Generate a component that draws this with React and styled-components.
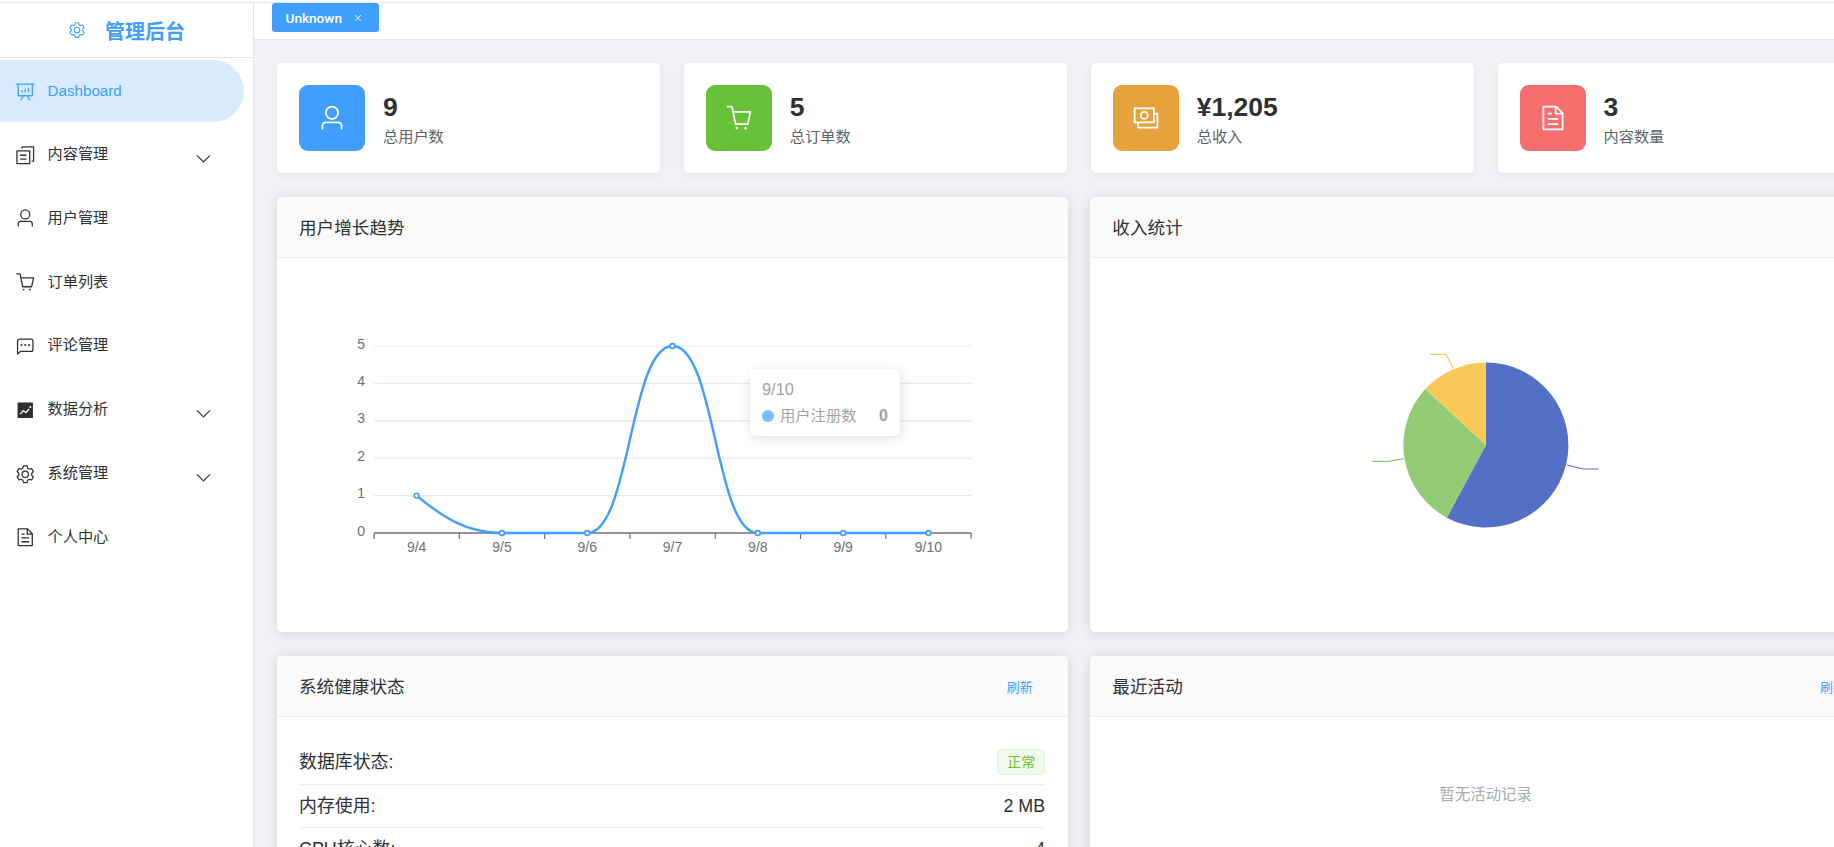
import React from "react";
import styled, { createGlobalStyle } from "styled-components";

const ICONS = {
    setting: "M600.704 64a32 32 0 0 1 30.464 22.208l35.2 109.376c14.784 7.232 28.928 15.36 42.432 24.512l112.384-24.192a32 32 0 0 1 34.432 15.36L944.32 364.8a32 32 0 0 1-4.032 37.504l-77.12 85.12a357.12 357.12 0 0 1 0 49.024l77.12 85.248a32 32 0 0 1 4.032 37.504l-88.704 153.6a32 32 0 0 1-34.432 15.296L708.8 803.904c-13.44 9.088-27.648 17.28-42.368 24.512l-35.264 109.376A32 32 0 0 1 600.704 960H423.296a32 32 0 0 1-30.464-22.208L357.696 828.48a351.616 351.616 0 0 1-42.56-24.64l-112.32 24.256a32 32 0 0 1-34.432-15.36L79.68 659.2a32 32 0 0 1 4.032-37.504l77.12-85.248a357.12 357.12 0 0 1 0-48.896l-77.12-85.248A32 32 0 0 1 79.68 364.8l88.704-153.6a32 32 0 0 1 34.432-15.296l112.32 24.256c13.568-9.152 27.776-17.408 42.56-24.64l35.2-109.312A32 32 0 0 1 423.232 64H600.64zm-23.424 64H446.72l-36.352 113.088-24.512 11.968a294.113 294.113 0 0 0-34.816 20.096l-22.656 15.36-116.224-25.088-65.28 113.152 79.68 88.192-1.92 27.136a293.12 293.12 0 0 0 0 40.192l1.92 27.136-79.808 88.192 65.344 113.152 116.224-25.024 22.656 15.296a294.113 294.113 0 0 0 34.816 20.096l24.512 11.968L446.72 896h130.688l36.48-113.152 24.448-11.904a288.282 288.282 0 0 0 34.752-20.096l22.592-15.296 116.288 25.024 65.28-113.152-79.744-88.192 1.92-27.136a293.12 293.12 0 0 0 0-40.256l-1.92-27.136 79.808-88.128-65.344-113.152-116.288 24.96-22.592-15.232a287.616 287.616 0 0 0-34.752-20.096l-24.448-11.904L577.344 128zM512 320a192 192 0 1 1 0 384 192 192 0 0 1 0-384zm0 64a128 128 0 1 0 0 256 128 128 0 0 0 0-256z",
    board: "m665.216 768 110.848 192h-73.856L591.36 768H433.664L322.56 960H248.32l110.848-192H160a32 32 0 0 1-32-32V192H64a32 32 0 0 1 0-64h896a32 32 0 1 1 0 64h-64v544a32 32 0 0 1-32 32H665.216zM832 192H192v512h640V192zM352 448a32 32 0 0 1 32 32v64a32 32 0 0 1-64 0v-64a32 32 0 0 1 32-32zm160-64a32 32 0 0 1 32 32v128a32 32 0 0 1-64 0V416a32 32 0 0 1 32-32zm160-64a32 32 0 0 1 32 32v192a32 32 0 1 1-64 0V352a32 32 0 0 1 32-32z",
    copy: "M128 320v576h576V320H128zm-32-64h640a32 32 0 0 1 32 32v640a32 32 0 0 1-32 32H96a32 32 0 0 1-32-32V288a32 32 0 0 1 32-32zM960 96v704a32 32 0 0 1-32 32h-96v-64h64V128H384v64h-64V96a32 32 0 0 1 32-32h576a32 32 0 0 1 32 32zM256 672h320v64H256v-64zm0-192h320v64H256v-64z",
    user: "M512 512a192 192 0 1 0 0-384 192 192 0 0 0 0 384zm0 64a256 256 0 1 1 0-512 256 256 0 0 1 0 512zm320 320v-96a96 96 0 0 0-96-96H288a96 96 0 0 0-96 96v96a32 32 0 1 1-64 0v-96a160 160 0 0 1 160-160h448a160 160 0 0 1 160 160v96a32 32 0 1 1-64 0z",
    cart: "M432 928a48 48 0 1 1 0-96 48 48 0 0 1 0 96zm320 0a48 48 0 1 1 0-96 48 48 0 0 1 0 96zM96 128a32 32 0 0 1 0-64h160a32 32 0 0 1 31.36 25.728L320.64 256H928a32 32 0 0 1 31.296 38.72l-96 448A32 32 0 0 1 832 768H384a32 32 0 0 1-31.36-25.728L229.76 128H96zm314.24 576h395.904l82.304-384H333.44l76.8 384z",
    chat: "M273.536 736H800a64 64 0 0 0 64-64V256a64 64 0 0 0-64-64H224a64 64 0 0 0-64 64v570.88L273.536 736zM296 800 147.968 918.4A32 32 0 0 1 96 893.44V256a128 128 0 0 1 128-128h576a128 128 0 0 1 128 128v416a128 128 0 0 1-128 128H296zM512 499.2a51.2 51.2 0 1 1 0-102.4 51.2 51.2 0 0 1 0 102.4zm192 0a51.2 51.2 0 1 1 0-102.4 51.2 51.2 0 0 1 0 102.4zm-384 0a51.2 51.2 0 1 1 0-102.4 51.2 51.2 0 0 1 0 102.4z",
    trend: "M128 896V128h768v768H128zm291.712-327.296 128 102.4 180.16-201.792-47.744-42.624-139.84 156.608-128-102.4-180.16 201.792 47.744 42.624 139.84-156.608zM816 352a48 48 0 1 0-96 0 48 48 0 0 0 96 0z",
    doc: "M832 384H576V128H192v768h640V384zm-26.496-64L640 154.496V320h165.504zM160 64h480l256 256v608a32 32 0 0 1-32 32H160a32 32 0 0 1-32-32V96a32 32 0 0 1 32-32zm160 448h384v64H320v-64zm0-192h160v64H320v-64zm0 384h384v64H320v-64z",
    money: "M256 640v192h640V384H768v-64h150.976c14.272 0 19.456 1.472 24.64 4.288a29.056 29.056 0 0 1 12.16 12.096c2.752 5.184 4.224 10.368 4.224 24.64v493.952c0 14.272-1.472 19.456-4.288 24.64a29.056 29.056 0 0 1-12.096 12.16c-5.184 2.752-10.368 4.224-24.64 4.224H233.024c-14.272 0-19.456-1.472-24.64-4.288a29.056 29.056 0 0 1-12.16-12.096c-2.688-5.184-4.224-10.368-4.224-24.576V640h64zM768 192H128v448h640V192zm64-22.976v493.952c0 14.272-1.472 19.456-4.288 24.64a29.056 29.056 0 0 1-12.096 12.16c-5.184 2.752-10.368 4.224-24.64 4.224H105.024c-14.272 0-19.456-1.472-24.64-4.288a29.056 29.056 0 0 1-12.16-12.096C65.536 682.432 64 677.248 64 663.04V169.024c0-14.272 1.472-19.456 4.288-24.64a29.056 29.056 0 0 1 12.096-12.16C85.568 129.536 90.752 128 104.96 128h685.952c14.272 0 19.456 1.472 24.64 4.288a29.056 29.056 0 0 1 12.16 12.096c2.752 5.184 4.224 10.368 4.224 24.64zM448 576a160 160 0 1 1 0-320 160 160 0 0 1 0 320zm0-64a96 96 0 1 0 0-192 96 96 0 0 0 0 192z",
    arrow: "M831.872 340.864 512 652.672 192.128 340.864a30.592 30.592 0 0 0-42.752 0 29.12 29.12 0 0 0 0 41.6L489.664 714.24a32 32 0 0 0 44.672 0l340.288-331.712a29.12 29.12 0 0 0 0-41.728 30.592 30.592 0 0 0-42.752 0z",
    close: "M764.288 214.592 512 466.88 259.712 214.592a31.936 31.936 0 0 0-45.12 45.12L466.752 512 214.528 764.224a31.936 31.936 0 1 0 45.12 45.184L512 557.184l252.288 252.288a31.936 31.936 0 0 0 45.12-45.12L557.12 512.064l252.288-252.352a31.936 31.936 0 1 0-45.12-45.184z",
};

const MENU = [
    { icon: "board", label: "Dashboard", active: true },
    { icon: "copy", label: "内容管理", sub: true },
    { icon: "user", label: "用户管理" },
    { icon: "cart", label: "订单列表" },
    { icon: "chat", label: "评论管理" },
    { icon: "trend", label: "数据分析", sub: true },
    { icon: "setting", label: "系统管理", sub: true },
    { icon: "doc", label: "个人中心" },
];

const STATS = [
    { icon: "user", color: "#409eff", value: "9", label: "总用户数" },
    { icon: "cart", color: "#67c23a", value: "5", label: "总订单数" },
    { icon: "money", color: "#e6a23c", value: "¥1,205", label: "总收入" },
    { icon: "doc", color: "#f76e6f", value: "3", label: "内容数量" },
];

// chart coordinates are taken straight from the page, the svg viewBox offsets them
const BAND = 85.3;
const AXIS_LEFT = 374;
const AXIS_RIGHT = 971;
const AXIS_Y = 533;
const ROW_H = 37.4;
const DAYS = ["9/4", "9/5", "9/6", "9/7", "9/8", "9/9", "9/10"];
const COUNTS = [1, 0, 0, 5, 0, 0, 0];
const pointX = (i) => AXIS_LEFT + BAND * (i + 0.5);
const pointY = (v) => AXIS_Y - v * ROW_H;

const LINE_PATH = `M${pointX(0)} ${pointY(1)} C${pointX(0) + 24} ${pointY(1) + 20} ${pointX(1) - 36} ${AXIS_Y} ${pointX(1)} ${AXIS_Y}
    L${pointX(2)} ${AXIS_Y}
    C${pointX(2) + 43} ${AXIS_Y} ${pointX(3) - 43} ${pointY(5)} ${pointX(3)} ${pointY(5)}
    C${pointX(3) + 43} ${pointY(5)} ${pointX(4) - 43} ${AXIS_Y} ${pointX(4)} ${AXIS_Y}
    L${pointX(6)} ${AXIS_Y}`;

const PIE = { cx: 1486.3, cy: 445, r: 82.5 };
const SLICES = [
    { color: "#5470c6", from: 0, to: 208.3, line: "1567.3,465 1583.3,469 1599,469" },
    { color: "#91cc75", from: 208.3, to: 312.7, line: "1404,458.7 1390,461.3 1372,461.3" },
    { color: "#fac858", from: 312.7, to: 360, line: "1453.3,368.3 1446.7,354.3 1430,354.3" },
];

const slicePath = ({ from, to }) => {
    const at = (deg) => {
        const a = (deg * Math.PI) / 180;
        return `${PIE.cx + PIE.r * Math.sin(a)} ${PIE.cy - PIE.r * Math.cos(a)}`;
    };
    return `M${PIE.cx} ${PIE.cy} L${at(from)} A${PIE.r} ${PIE.r} 0 ${to - from > 180 ? 1 : 0} 1 ${at(to)} Z`;
};

const Icon = ({ name, size, color, className }) => (
    <IconSvg viewBox="0 0 1024 1024" $size={size} $color={color} className={className}>
        <path fill="currentColor" d={ICONS[name]} />
    </IconSvg>
);

function LineChart() {
    return (
        <ChartSvg viewBox="277 258 791 374" width="791" height="374">
            {[1, 2, 3, 4, 5].map((v) => (
                <line key={v} x1={AXIS_LEFT} x2={AXIS_RIGHT} y1={pointY(v)} y2={pointY(v)} stroke="#e4e9f5" strokeWidth="1.2" />
            ))}
            <line x1={AXIS_LEFT} x2={AXIS_RIGHT} y1={AXIS_Y} y2={AXIS_Y} stroke="#6e7079" strokeWidth="1.4" />
            {Array.from({ length: 8 }, (_, i) => (
                <line key={i} x1={AXIS_LEFT + BAND * i} x2={AXIS_LEFT + BAND * i} y1={AXIS_Y} y2={AXIS_Y + 6} stroke="#6e7079" strokeWidth="1.2" />
            ))}
            {[0, 1, 2, 3, 4, 5].map((v) => (
                <AxisText key={v} x="365" y={pointY(v) + 2.5} textAnchor="end">{v}</AxisText>
            ))}
            {DAYS.map((d, i) => (
                <AxisText key={d} x={pointX(i)} y="551.5" textAnchor="middle">{d}</AxisText>
            ))}
            <path d={LINE_PATH} fill="none" stroke="#409eff" strokeWidth="2.4" />
            {COUNTS.map((v, i) => (
                <circle key={i} cx={pointX(i)} cy={pointY(v)} r="2.4" fill="#fff" stroke="#409eff" strokeWidth="1.6" />
            ))}
        </ChartSvg>
    );
}

function PieChart() {
    return (
        <ChartSvg viewBox="1090.4 258 791 374" width="791" height="374">
            {SLICES.map((s) => (
                <g key={s.color}>
                    <polyline points={s.line} fill="none" stroke={s.color} strokeWidth="1.2" />
                    <path d={slicePath(s)} fill={s.color} />
                </g>
            ))}
        </ChartSvg>
    );
}

export default function App() {
    return (
        <Page>
            <GlobalStyle />
            <TopRule />
            <Layout>
                <Sidebar>
                    <Logo>
                        <Icon name="setting" size={18} color="#409eff" />
                        <LogoText>管理后台</LogoText>
                    </Logo>
                    <Menu>
                        {MENU.map((item) => (
                            <MenuItem key={item.label} $active={item.active}>
                                <Icon name={item.icon} size={20.5} />
                                <MenuLabel $active={item.active}>{item.label}</MenuLabel>
                                {item.sub && <MenuArrow name="arrow" size={19} color="#303133" />}
                            </MenuItem>
                        ))}
                    </Menu>
                </Sidebar>
                <Main>
                    <TabBar>
                        <Tab>
                            Unknown
                            <Icon name="close" size={10} />
                        </Tab>
                    </TabBar>
                    <Content>
                        <StatRow>
                            {STATS.map((s) => (
                                <StatCard key={s.label}>
                                    <StatIcon $color={s.color}>
                                        <Icon name={s.icon} size={28} />
                                    </StatIcon>
                                    <div>
                                        <StatValue>{s.value}</StatValue>
                                        <StatLabel>{s.label}</StatLabel>
                                    </div>
                                </StatCard>
                            ))}
                        </StatRow>
                        <CardRow>
                            <Card>
                                <CardHeader>
                                    <CardTitle>用户增长趋势</CardTitle>
                                </CardHeader>
                                <ChartArea>
                                    <LineChart />
                                    <Tooltip>
                                        <TooltipTitle>9/10</TooltipTitle>
                                        <TooltipRow>
                                            <TooltipDot />
                                            用户注册数
                                            <TooltipValue>0</TooltipValue>
                                        </TooltipRow>
                                    </Tooltip>
                                </ChartArea>
                            </Card>
                            <Card>
                                <CardHeader>
                                    <CardTitle>收入统计</CardTitle>
                                </CardHeader>
                                <ChartArea>
                                    <PieChart />
                                </ChartArea>
                            </Card>
                        </CardRow>
                        <CardRow>
                            <Card>
                                <CardHeader>
                                    <CardTitle>系统健康状态</CardTitle>
                                    <RefreshLink>刷新</RefreshLink>
                                </CardHeader>
                                <HealthBody>
                                    <HealthRow>
                                        <span>数据库状态:</span>
                                        <StatusTag>正常</StatusTag>
                                    </HealthRow>
                                    <HealthRow>
                                        <span>内存使用:</span>
                                        <span>2 MB</span>
                                    </HealthRow>
                                    <HealthRow>
                                        <span>CPU核心数:</span>
                                        <span>4</span>
                                    </HealthRow>
                                </HealthBody>
                            </Card>
                            <Card>
                                <CardHeader>
                                    <CardTitle>最近活动</CardTitle>
                                    <RefreshLink>刷新</RefreshLink>
                                </CardHeader>
                                <EmptyNote>暂无活动记录</EmptyNote>
                            </Card>
                        </CardRow>
                    </Content>
                </Main>
            </Layout>
        </Page>
    );
}

const GlobalStyle = createGlobalStyle`
    html, body {
        margin: 0;
        height: 100%;
        overflow: hidden;
        background: #fff;
    }
    * {
        box-sizing: border-box;
    }
`;

const Page = styled.div`
    width: 1834px;
    height: 847px;
    overflow: hidden;
    display: flex;
    flex-direction: column;
    font-family: "Liberation Sans", "Noto Sans CJK SC", sans-serif;
    color: #303133;
`;

const TopRule = styled.div`
    flex: none;
    height: 3px;
    border-bottom: 1px solid #e6e8f0;
`;

const Layout = styled.div`
    flex: 1;
    display: flex;
    min-height: 0;
`;

const IconSvg = styled.svg`
    flex: none;
    display: block;
    width: ${(p) => p.$size}px;
    height: ${(p) => p.$size}px;
    color: ${(p) => p.$color || "currentColor"};
`;

const Sidebar = styled.aside`
    flex: none;
    width: 254px;
    background: #fff;
    border-right: 1px solid #e6e6e6;
`;

const Logo = styled.div`
    height: 55px;
    display: flex;
    align-items: center;
    padding-left: 68px;
    gap: 19px;
    border-bottom: 1px solid #e6e6e6;
`;

const LogoText = styled.span`
    font-size: 20px;
    font-weight: 700;
    color: #409eff;
`;

const Menu = styled.nav`
    display: flex;
    flex-direction: column;
    gap: 1.8px;
    padding-top: 2px;
`;

const MenuItem = styled.div`
    width: 244px;
    height: 62px;
    display: flex;
    align-items: center;
    padding: 0 31px 0 15px;
    gap: 12px;
    font-size: 15.2px;
    color: ${(p) => (p.$active ? "#409eff" : "#303133")};
    background: ${(p) => (p.$active ? "#d9ecff" : "transparent")};
    border-radius: ${(p) => (p.$active ? "0 31px 31px 0" : "0")};
`;

const MenuLabel = styled.span`
    flex: 1;
    padding-bottom: ${(p) => (p.$active ? "2px" : "5.5px")};
`;

const MenuArrow = styled(Icon)`
    margin-top: 7px;
`;

const Main = styled.main`
    flex: 1;
    min-width: 0;
    display: flex;
    flex-direction: column;
    background: #f0f2f5;
`;

const TabBar = styled.div`
    flex: none;
    height: 37px;
    padding-left: 18px;
    background: #fff;
    border-bottom: 1px solid #e4e7ed;
`;

const Tab = styled.div`
    width: 107px;
    height: 29px;
    display: flex;
    align-items: center;
    gap: 11px;
    padding-left: 13.5px;
    border-radius: 3px;
    background: #409eff;
    color: #fff;
    font-family: Roboto, "Liberation Sans", sans-serif;
    font-size: 13.6px;
    font-weight: 500;
`;

const Content = styled.div`
    width: 1650px;
    padding: 23px 23px 0;
    display: flex;
    flex-direction: column;
    gap: 24px;
`;

const StatRow = styled.div`
    display: grid;
    grid-template-columns: repeat(4, 1fr);
    gap: 23.4px;
`;

const StatCard = styled.div`
    height: 110px;
    display: flex;
    align-items: center;
    gap: 18px;
    padding: 0 22px;
    background: #fff;
    border-radius: 5px;
    box-shadow: 0 2px 8px rgba(0, 0, 0, 0.06);
`;

const StatIcon = styled.div`
    flex: none;
    width: 66px;
    height: 66px;
    display: flex;
    align-items: center;
    justify-content: center;
    border-radius: 9px;
    background: ${(p) => p.$color};
    color: #fff;
`;

const StatValue = styled.div`
    margin-top: 2px;
    font-size: 26.5px;
    font-weight: 700;
    line-height: 33px;
    color: #303133;
`;

const StatLabel = styled.div`
    margin-top: 3px;
    font-size: 15.2px;
    line-height: 20px;
    color: #606266;
`;

const CardRow = styled.div`
    display: grid;
    grid-template-columns: repeat(2, 1fr);
    gap: 22.7px;
`;

const Card = styled.section`
    background: #fff;
    border-radius: 5px;
    box-shadow: 0 1px 14px rgba(0, 0, 0, 0.12);
    overflow: hidden;
`;

const CardHeader = styled.header`
    height: 61px;
    display: flex;
    align-items: center;
    justify-content: space-between;
    padding: 0 35px 0 22px;
    background: #fafafa;
    border-bottom: 1px solid #ebeef5;
`;

const CardTitle = styled.h3`
    margin: 0 0 2px;
    font-size: 17.6px;
    font-weight: 400;
    color: #303133;
`;

const RefreshLink = styled.span`
    font-size: 13px;
    color: #409eff;
`;

const ChartArea = styled.div`
    position: relative;
    height: 374px;
`;

const ChartSvg = styled.svg`
    display: block;
`;

const AxisText = styled.text`
    font-size: 14px;
    font-family: "Liberation Sans", sans-serif;
    fill: #6e7079;
`;

const Tooltip = styled.div`
    position: absolute;
    left: 473px;
    top: 111px;
    width: 150px;
    height: 67px;
    padding: 9px 12px;
    border-radius: 5px;
    background: rgba(255, 255, 255, 0.92);
    box-shadow: 1px 2px 12px rgba(0, 0, 0, 0.13);
    color: #a3a3a3;
    font-size: 15.3px;
`;

const TooltipTitle = styled.div`
    font-size: 16.4px;
    line-height: 22px;
`;

const TooltipRow = styled.div`
    display: flex;
    align-items: center;
    margin-top: 4px;
    line-height: 24px;
`;

const TooltipDot = styled.span`
    width: 12px;
    height: 12px;
    margin-right: 6px;
    border-radius: 50%;
    background: #7fbcff;
`;

const TooltipValue = styled.b`
    margin-left: auto;
    font-size: 16px;
    color: #a0a0a0;
`;

const HealthBody = styled.div`
    padding: 23px 22.5px 0 22px;
`;

const HealthRow = styled.div`
    display: flex;
    align-items: center;
    justify-content: space-between;
    padding: 9px 0;
    line-height: 24px;
    font-size: 17.9px;
    color: #303133;
    border-bottom: 1px solid #ebeef5;
`;

const StatusTag = styled.span`
    width: 48px;
    height: 26px;
    display: flex;
    align-items: center;
    justify-content: center;
    font-size: 14px;
    color: #67c23a;
    background: #f0f9eb;
    border: 1px solid #e1f3d8;
    border-radius: 4px;
`;

const EmptyNote = styled.div`
    padding-top: 67px;
    text-align: center;
    font-size: 15.4px;
    line-height: 22px;
    color: #a8abb2;
`;
